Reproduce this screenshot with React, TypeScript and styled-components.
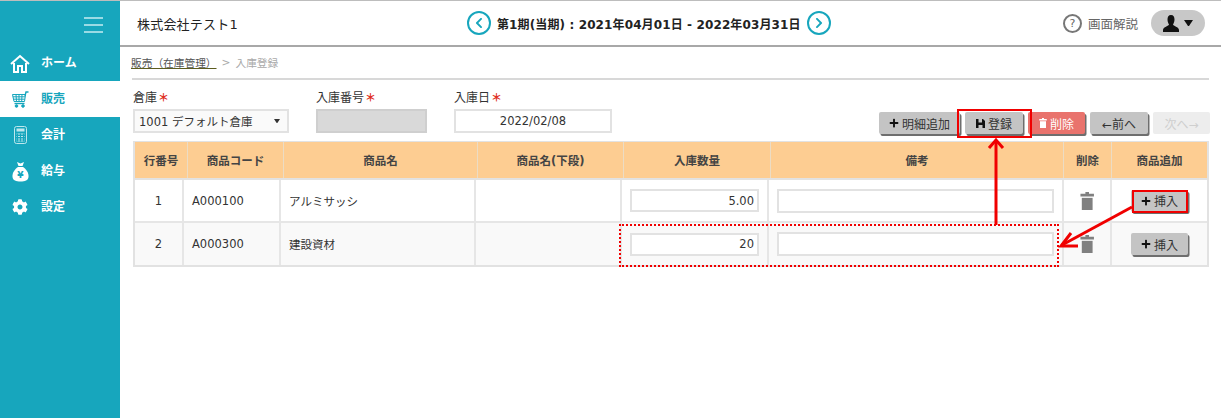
import React from 'react';
import styled, { createGlobalStyle } from 'styled-components';
import { FaCog, FaPlus, FaChevronLeft, FaChevronRight } from 'react-icons/fa';

const GlobalStyle = createGlobalStyle`
  html, body {
    margin: 0;
    padding: 0;
    background: #fff;
    font-family: "DejaVu Sans", "Noto Sans CJK JP", sans-serif;
    font-size: 11.5px;
    color: #333;
  }
`;

const Page = styled.div`
  position: relative;
  display: flex;
  width: 1221px;
  height: 418px;
  overflow: hidden;
  box-sizing: border-box;
  border-top: 1px solid #bdbdbd;
`;

const Sidebar = styled.nav`
  display: flex;
  flex-direction: column;
  flex: 0 0 120px;
  background: #17a6bd;
`;

const Burger = styled.div`
  display: flex;
  flex-direction: column;
  gap: 5px;
  align-self: flex-end;
  width: 19px;
  margin: 16px 17px 0 0;
  height: 28px;

  span {
    height: 2px;
    background: #9adbe5;
  }
`;

const NavItem = styled.div<{ $active?: boolean }>`
  display: flex;
  align-items: center;
  height: 36px;
  box-sizing: border-box;
  font-weight: 700;
  font-size: 12px;
  color: ${p => (p.$active ? '#17a6bd' : '#fff')};
  background: ${p => (p.$active ? '#fff' : 'transparent')};
`;

const NavIcon = styled.span`
  display: flex;
  justify-content: center;
  width: 40px;
  padding-right: 1px;
  font-size: 16px;
`;

const NavLabel = styled.span`
  margin-bottom: 3px;
`;

const Main = styled.div`
  display: flex;
  flex-direction: column;
  flex: 1;
  min-width: 0;
`;

const Header = styled.header`
  display: flex;
  align-items: center;
  flex: 0 0 46px;
  box-sizing: border-box;
  padding: 0 16px 0 17px;
  border-bottom: 2px solid #a8a8a8;
  color: #222;
`;

const Company = styled.div`
  width: 330px;
  font-size: 13px;
  letter-spacing: 0.2px;
`;

const Period = styled.div`
  display: flex;
  align-items: center;
  gap: 6px;
  font-size: 12px;
  font-weight: 700;
  letter-spacing: 0.12px;
  color: #222;
`;

const RoundArrow = styled.span`
  display: flex;
  align-items: center;
  justify-content: center;
  box-sizing: border-box;
  width: 24px;
  height: 24px;
  border: 2px solid #17a6bd;
  border-radius: 50%;
  color: #17a6bd;
  font-size: 12px;
`;

const HeaderRight = styled.div`
  display: flex;
  align-items: center;
  margin-left: auto;
  font-size: 12.5px;
  color: #666;
`;

const HelpMark = styled.span`
  display: flex;
  align-items: center;
  justify-content: center;
  box-sizing: border-box;
  width: 19px;
  height: 19px;
  margin-right: 6px;
  border: 2px solid #777;
  border-radius: 50%;
  font-size: 11px;
  line-height: 1;
`;

const UserPill = styled.span`
  display: flex;
  align-items: center;
  justify-content: center;
  gap: 5px;
  width: 54px;
  height: 26px;
  margin-left: 13px;
  border-radius: 13px;
  background: #c8c8c8;
`;

const Content = styled.div`
  display: flex;
  flex-direction: column;
  padding: 0 12px 0 13px;
`;

const Breadcrumb = styled.div`
  display: flex;
  align-items: center;
  gap: 5px;
  height: 33px;
  box-sizing: border-box;
  margin-left: -1px;
  border-bottom: 2px solid #d8d8d8;
  font-size: 10.7px;
  color: #aaa;

  a {
    margin-left: -1px;
    color: #555;
    text-decoration: underline;
    text-decoration-color: #5c5c1e;
  }
`;

const FormRow = styled.div`
  display: flex;
  align-items: flex-end;
  height: 61px;
`;

const Field = styled.div<{ $width: number; $gap: number }>`
  display: flex;
  flex-direction: column;
  gap: 2px;
  width: ${p => p.$width}px;
  margin-right: ${p => p.$gap}px;
  padding-bottom: 8px;
`;

const Label = styled.label`
  font-size: 12px;
  line-height: 17px;
  color: #333;

  i {
    margin-left: 1px;
    font-size: 11px;
    font-style: normal;
    color: #e0301e;
    font-weight: 700;
  }
`;

const inputBox = `
  box-sizing: border-box;
  height: 24px;
  border: 2px solid #e2e2e2;
  font-size: 11.5px;
  color: #333;
  background: #fff;
`;

const SelectBox = styled.div`
  ${inputBox}
  display: flex;
  align-items: center;
  justify-content: space-between;
  padding: 0 7px 0 4px;
  background: #fafafa;
`;

const ReadOnlyBox = styled.div`
  ${inputBox}
  background: #d9d9d9;
  border-color: #cfcfcf;
`;

const DateBox = styled.div`
  ${inputBox}
  display: flex;
  align-items: center;
  justify-content: center;
`;

const Toolbar = styled.div`
  display: flex;
  align-items: center;
  gap: 5px;
  margin-left: auto;
  margin-right: -1px;
  padding-bottom: 7px;
`;

const Button = styled.button<{ $width: number; $tone?: 'danger' | 'disabled' }>`
  display: flex;
  align-items: center;
  justify-content: center;
  gap: 3px;
  box-sizing: border-box;
  width: ${p => p.$width}px;
  height: 22px;
  padding: 0;
  border: 0;
  border-radius: 2px;
  font-family: inherit;
  font-size: 12px;
  color: ${p => (p.$tone === 'danger' ? '#fff' : p.$tone === 'disabled' ? '#cfcfcf' : '#333')};
  background: ${p => (p.$tone === 'danger' ? '#e9736d' : p.$tone === 'disabled' ? '#ededed' : '#c4c4c4')};
  box-shadow: ${p => (p.$tone === 'disabled' ? 'none' : '1.5px 2px 0 #6e6e6e')};

  svg {
    flex: none;
  }
`;

const Plus = styled(FaPlus)`
  font-size: 10px;
  color: #111;
`;

const Table = styled.div`
  display: flex;
  flex-direction: column;
  border: 2px solid #e2e2e2;
  border-top-width: 1px;
`;

const HeadRow = styled.div`
  display: grid;
  grid-template-columns: 52px 96px 194px 146px 147px 293px 48px 1fr;
  height: 38px;
  box-sizing: border-box;
  background: #fdcd92;
  border-bottom: 2px solid #e2e2e2;
`;

const HeadCell = styled.div`
  display: flex;
  align-items: center;
  justify-content: center;
  font-weight: 700;
  font-size: 11.5px;
  color: #444;
  border-left: 1px solid #ecdcc4;

  &:first-child {
    border-left: 0;
  }
`;

const BodyRow = styled.div<{ $shade?: boolean }>`
  display: grid;
  grid-template-columns: 47px 97px 195px 146px 147px 295px 48px 1fr;
  height: 41px;
  background: ${p => (p.$shade ? '#f9f9f9' : '#fff')};

  & + & {
    border-top: 2px solid #e6e6e6;
    height: 42px;
  }
`;

const Cell = styled.div<{ $align?: 'left' | 'center' }>`
  display: flex;
  align-items: center;
  justify-content: ${p => (p.$align === 'left' ? 'flex-start' : 'center')};
  padding-left: ${p => (p.$align === 'left' ? '8px' : '0')};
  box-sizing: border-box;
  min-width: 0;
  font-size: 11.5px;
  color: #333;
  border-left: 2px solid #e6e6e6;

  &:first-child {
    border-left: 0;
  }
`;

const QtyInput = styled.div`
  ${inputBox}
  display: flex;
  align-items: center;
  justify-content: flex-end;
  width: 129px;
  height: 23px;
  padding-right: 3px;
`;

const NoteInput = styled.div`
  ${inputBox}
  width: 277px;
`;

const Frame = styled.div<{ $x: number; $y: number; $w: number; $h: number; $dotted?: boolean }>`
  position: absolute;
  left: ${p => p.$x}px;
  top: ${p => p.$y}px;
  width: ${p => p.$w}px;
  height: ${p => p.$h}px;
  box-sizing: border-box;
  border: 2px ${p => (p.$dotted ? 'dotted' : 'solid')} #f00000;
  pointer-events: none;
`;

const Arrows = styled.svg`
  position: absolute;
  left: 0;
  top: 0;
  pointer-events: none;
`;

const HomeIcon = () => (
  <svg width="20" height="19" viewBox="0 0 20 19" fill="none" stroke="#fff" strokeWidth="2">
    <path d="M1 10 L10 2 L19 10" />
    <path d="M4 9 V18 H8 V12 H12 V18 H16 V9" />
  </svg>
);

const CartIcon = () => (
  <svg width="17" height="17" viewBox="0 0 17 17" fill="none" stroke="#17a6bd" strokeWidth="1">
    <path d="M0.5 3.5 H13.5 L12.5 10.5 H2 Z" />
    <path d="M0.8 5.8 H13.2 M1.2 8.2 H12.8 M4 3.5 L4.5 10.5 M7 3.5 V10.5 M10 3.5 L9.7 10.5" />
    <path d="M13 5 L14 1 H16.5" strokeWidth="1.4" />
    <path d="M2.5 12.5 H12.5" strokeWidth="1.4" />
    <circle cx="4.5" cy="15" r="1.3" fill="#17a6bd" />
    <circle cx="11" cy="15" r="1.3" fill="#17a6bd" />
  </svg>
);

const CalcIcon = () => (
  <svg width="13" height="18" viewBox="0 0 13 18">
    <rect x="0.5" y="0.5" width="12" height="17" rx="2" fill="none" stroke="#bfe8ee" />
    <rect x="2.5" y="2.5" width="8" height="3" fill="#bfe8ee" />
    <path d="M2.5 8 H10.5 M2.5 10.5 H10.5 M2.5 13 H10.5 M2.5 15 H10.5" stroke="#bfe8ee" />
    <path d="M3.5 7.5 V15.5 M6.5 7.5 V15.5 M9.5 7.5 V15.5" stroke="#17a6bd" />
  </svg>
);

const BagIcon = () => (
  <svg width="17" height="21" viewBox="0 0 17 21">
    <path d="M5 1 L8.5 2.5 L12 1 L10.5 5 H6.5 Z" fill="#fff" />
    <path d="M6 6 H11 C14 8 17 12 16.5 16 C16 19.5 13 20.5 8.5 20.5 C4 20.5 1 19.5 0.5 16 C0 12 3 8 6 6 Z" fill="#fff" />
    <text x="8.5" y="17" fontSize="9" fontWeight="700" textAnchor="middle" fill="#17a6bd">¥</text>
  </svg>
);

const TrashIcon = ({ height, color }: { height: number; color: string }) => (
  <svg width={height * 0.8} height={height} viewBox="0 0 16 20" fill={color}>
    <path d="M6 0 H10 V2 H15.5 V5 H0.5 V2 H6 Z" />
    <rect x="2" y="6.5" width="12" height="13.5" />
  </svg>
);

const SaveIcon = () => (
  <svg width="9" height="9" viewBox="0 0 9 9" fill="#111">
    <path d="M0 0 H2.5 V3.5 H6 V0 H7 L9 2 V9 H6.5 V6 H2.5 V9 H0 Z" />
  </svg>
);

const UserIcon = () => (
  <svg width="16" height="17" viewBox="0 0 16 17" fill="#111">
    <path d="M8 0 C10.5 0 11.5 2 11.5 4.5 C11.5 7 10.5 8.5 10 9.5 C10 11 16 12 16 15 V17 H0 V15 C0 12 6 11 6 9.5 C5.5 8.5 4.5 7 4.5 4.5 C4.5 2 5.5 0 8 0 Z" />
  </svg>
);

const CaretIcon = ({ size, color }: { size: number; color: string }) => (
  <svg width={size} height={size * 0.75} viewBox="0 0 8 6" fill={color}>
    <path d="M0 0 H8 L4 6 Z" />
  </svg>
);

const navItems = [
  { label: 'ホーム', icon: <HomeIcon /> },
  { label: '販売', icon: <CartIcon />, active: true },
  { label: '会計', icon: <CalcIcon /> },
  { label: '給与', icon: <BagIcon /> },
  { label: '設定', icon: <FaCog /> },
];

const rows = [
  { no: '1', code: 'A000100', name: 'アルミサッシ', qty: '5.00' },
  { no: '2', code: 'A000300', name: '建設資材', qty: '20', shade: true },
];

const heads = ['行番号', '商品コード', '商品名', '商品名(下段)', '入庫数量', '備考', '削除', '商品追加'];

const App = () => (
  <Page>
    <GlobalStyle />
    <Sidebar>
      <Burger><span /><span /><span /></Burger>
      {navItems.map(item => (
        <NavItem key={item.label} $active={item.active}>
          <NavIcon>{item.icon}</NavIcon>
          <NavLabel>{item.label}</NavLabel>
        </NavItem>
      ))}
    </Sidebar>
    <Main>
      <Header>
        <Company>株式会社テスト1</Company>
        <Period>
          <RoundArrow><FaChevronLeft /></RoundArrow>
          第1期(当期) : 2021年04月01日 - 2022年03月31日
          <RoundArrow><FaChevronRight /></RoundArrow>
        </Period>
        <HeaderRight>
          <HelpMark>?</HelpMark>
          画面解説
          <UserPill><UserIcon /><CaretIcon size={9} color="#111" /></UserPill>
        </HeaderRight>
      </Header>
      <Content>
        <Breadcrumb>
          <a>販売（在庫管理）</a>
          <span>&gt;</span>
          <span>入庫登録</span>
        </Breadcrumb>
        <FormRow>
          <Field $width={156} $gap={27}>
            <Label>倉庫<i>＊</i></Label>
            <SelectBox>1001 デフォルト倉庫<CaretIcon size={6} color="#333" /></SelectBox>
          </Field>
          <Field $width={111} $gap={27}>
            <Label>入庫番号<i>＊</i></Label>
            <ReadOnlyBox />
          </Field>
          <Field $width={158} $gap={0}>
            <Label>入庫日<i>＊</i></Label>
            <DateBox>2022/02/08</DateBox>
          </Field>
          <Toolbar>
            <Button $width={81}><Plus />明細追加</Button>
            <Button $width={58}><SaveIcon />登録</Button>
            <Button $width={57} $tone="danger"><TrashIcon height={10} color="#fff" />削除</Button>
            <Button $width={58}>←前へ</Button>
            <Button $width={57} $tone="disabled">次へ→</Button>
          </Toolbar>
        </FormRow>
        <Table>
          <HeadRow>
            {heads.map(h => <HeadCell key={h}>{h}</HeadCell>)}
          </HeadRow>
          {rows.map(r => (
            <BodyRow key={r.no} $shade={r.shade}>
              <Cell>{r.no}</Cell>
              <Cell $align="left">{r.code}</Cell>
              <Cell $align="left">{r.name}</Cell>
              <Cell />
              <Cell><QtyInput>{r.qty}</QtyInput></Cell>
              <Cell><NoteInput /></Cell>
              <Cell><TrashIcon height={18} color="#808080" /></Cell>
              <Cell><Button $width={57}><Plus />挿入</Button></Cell>
            </BodyRow>
          ))}
        </Table>
      </Content>
    </Main>
    <Frame $x={957} $y={108} $w={75} $h={29} />
    <Frame $x={1132} $y={189} $w={56} $h={23} />
    <Frame $x={619} $y={223} $w={440} $h={43} $dotted />
    <Arrows width="1221" height="418" viewBox="0 0 1221 418" fill="none" stroke="#f00000" strokeWidth="3">
      <path d="M996 224 V140" />
      <path d="M989 147 L996 139 L1003 147" />
      <path d="M1132 206 L1062 244" />
      <path d="M1071 232 L1061 245 L1078 245" />
    </Arrows>
  </Page>
);

export default App;
